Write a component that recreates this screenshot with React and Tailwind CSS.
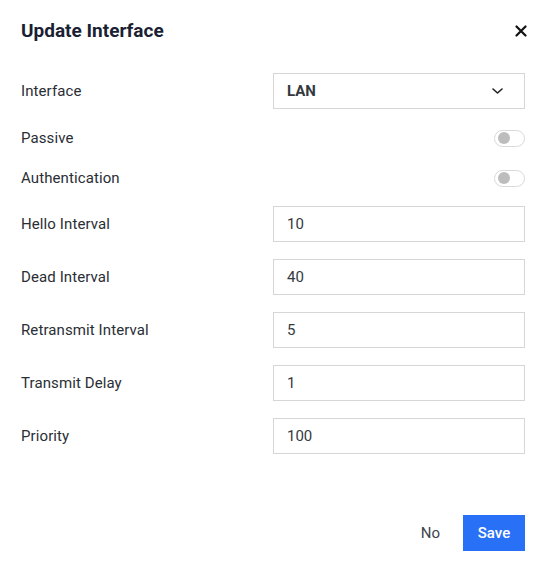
import React from 'react'

const fields = [
  { label: 'Hello Interval', value: '10' },
  { label: 'Dead Interval', value: '40' },
  { label: 'Retransmit Interval', value: '5' },
  { label: 'Transmit Delay', value: '1' },
  { label: 'Priority', value: '100' },
]

const Toggle = () => (
  <div className="w-[31px] h-[17px] rounded-full border border-[#d9d9d9] bg-white flex items-center pl-[3px]">
    <div className="w-[12px] h-[12px] rounded-full bg-[#bdbdbd]" />
  </div>
)

const App = () => {
  return (
    <div className="w-[542px] h-[569px] bg-white font-['Roboto',sans-serif] text-[#2a2e35] flex flex-col pl-[21px] pr-[17px]">
      {/* Header */}
      <div className="h-[73px] flex items-start justify-between pt-[19px]">
        <h1 className="text-[19px] leading-[24px] font-bold text-[#1b1f33]">Update Interface</h1>
        <svg width="12" height="12" viewBox="0 0 12 12" className="mt-[6px] mr-[-2px]">
          <path d="M1.5 1.5 L10.5 10.5 M10.5 1.5 L1.5 10.5" stroke="#111" strokeWidth="2.2" strokeLinecap="round" />
        </svg>
      </div>

      {/* Interface select */}
      <div className="flex items-center justify-between h-[36px]">
        <span className="text-[15px] tracking-[0.1px]">Interface</span>
        <div className="w-[252px] h-[36px] border border-[#d6d6d6] flex items-center justify-between pl-[13px] pr-[21px]">
          <span className="text-[15px] font-bold text-[#343a40]">LAN</span>
          <svg width="11" height="6" viewBox="0 0 11 6">
            <path d="M1 1 L5.5 5 L10 1" stroke="#222" strokeWidth="1.6" fill="none" strokeLinecap="round" strokeLinejoin="round" />
          </svg>
        </div>
      </div>

      <div className="flex items-center justify-between h-[24px] mt-[17px]">
        <span className="text-[15px] tracking-[0.1px]">Passive</span>
        <Toggle />
      </div>
      <div className="flex items-center justify-between h-[24px] mt-[16px]">
        <span className="text-[15px] tracking-[0.1px]">Authentication</span>
        <Toggle />
      </div>

      <div className="flex flex-col gap-[17px] mt-[16px]">
        {fields.map((f) => (
          <div key={f.label} className="flex items-center justify-between h-[36px]">
            <span className="text-[15px] tracking-[0.1px]">{f.label}</span>
            <div className="w-[252px] h-[36px] border border-[#d6d6d6] flex items-center pl-[13px]">
              <span className="text-[15px] text-[#343a40]">{f.value}</span>
            </div>
          </div>
        ))}
      </div>

      {/* Footer */}
      <div className="flex items-center justify-end gap-[23px] mt-[61px]">
        <button className="text-[15px] text-[#3d4450]">No</button>
        <button className="h-[36px] w-[62px] bg-[#2871f6] text-white text-[15px] font-medium">Save</button>
      </div>
    </div>
  )
}

export default App
